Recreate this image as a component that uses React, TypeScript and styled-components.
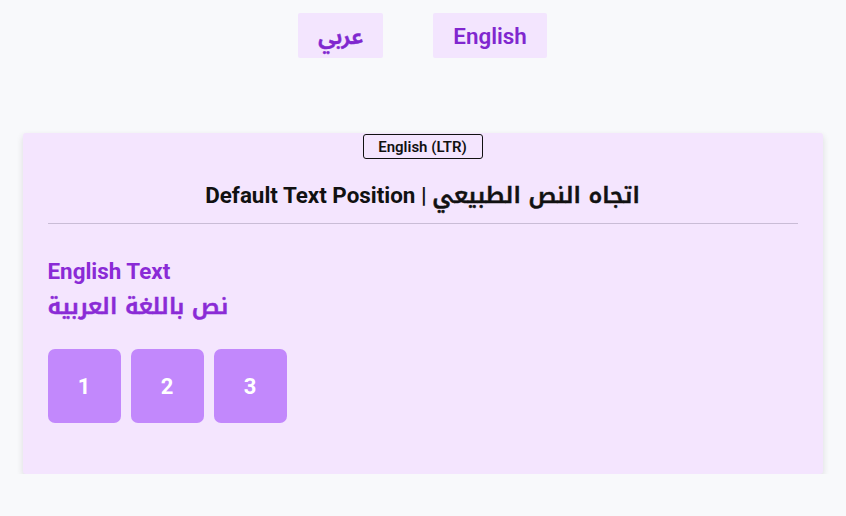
import React, { FunctionComponent, useState } from 'react';
import styled, { createGlobalStyle } from 'styled-components';

const GlobalStyle = createGlobalStyle`
  html, body {
    margin: 0;
    padding: 0;
    background-color: #f8f9fb;
    font-family: Roboto, "Noto Sans", "DejaVu Sans", sans-serif;
  }
`;

const Page = styled.div`
  display: flex;
  flex-direction: column;
  align-items: center;
  padding-top: 13px;
`;

const LangBar = styled.div`
  display: flex;
  gap: 50px;
  justify-content: center;
  margin-left: -1px;
`;

const LangButton = styled.button`
  height: 45px;
  padding: 0 20px;
  border: none;
  border-radius: 2px;
  background-color: #f3e5fe;
  color: #8027cf;
  font-family: inherit;
  font-size: 22.4px;
  font-weight: 600;
  cursor: pointer;
`;

const Card = styled.div`
  width: 800px;
  margin-top: 75px;
  margin-left: -1px;
  box-sizing: border-box;
  padding: 1px 25px 51px;
  background-color: #f4e5fe;
  border-radius: 3px;
  box-shadow: 0 3px 7px rgba(0, 0, 0, 0.12);
`;

const CardHeader = styled.div`
  display: flex;
  flex-direction: column;
  align-items: center;
  border-bottom: 1px solid #c9bcd6;
  padding-bottom: 14px;
`;

const Tag = styled.span`
  display: inline-flex;
  align-items: center;
  justify-content: center;
  width: 120px;
  height: 25px;
  box-sizing: border-box;
  border: 1px solid #111;
  border-radius: 3px;
  font-size: 15px;
  font-weight: 600;
  color: #111;
`;

const Title = styled.h2`
  margin: 23px 0 0;
  font-size: 22.4px;
  font-weight: 700;
  color: #111;
  line-height: 26px;
`;

const Body = styled.div`
  display: flex;
  flex-direction: column;
  align-items: flex-start;
  padding-top: 32px;
`;

const Line = styled.p`
  margin: 0;
  font-size: 22.4px;
  font-weight: 700;
  color: #8a2bd6;
  line-height: 30px;
  & + & {
    margin-top: 5px;
  }
`;

const Arabic = styled.span<{ $ui?: boolean }>`
  font-family: ${({ $ui }) =>
    $ui ? '"Noto Sans Arabic", sans-serif' : '"Noto Kufi Arabic", "DejaVu Sans", sans-serif'};
  font-weight: 600;
  -webkit-text-stroke: 0.5px currentColor;
`;

const Boxes = styled.div`
  display: flex;
  gap: 10px;
  margin-top: 27px;
`;

const Box = styled.div`
  display: flex;
  align-items: center;
  justify-content: center;
  width: 73px;
  height: 74px;
  border-radius: 7px;
  background-color: #c288fc;
  color: #fff;
  font-size: 22px;
  font-weight: 700;
`;

const App: FunctionComponent = () => {
  const [lang, setLang] = useState<'en' | 'ar'>('en');

  return (
    <Page>
      <GlobalStyle />
      <LangBar>
        <LangButton onClick={() => setLang('ar')}>
          <Arabic $ui>عربي</Arabic>
        </LangButton>
        <LangButton onClick={() => setLang('en')}>English</LangButton>
      </LangBar>
      <Card dir={lang === 'ar' ? 'rtl' : 'ltr'}>
        <CardHeader>
          <Tag>English (LTR)</Tag>
          <Title>
            Default Text Position | <Arabic>اتجاه النص الطبيعي</Arabic>
          </Title>
        </CardHeader>
        <Body>
          <Line>English Text</Line>
          <Line>
            <Arabic>نص باللغة العربية</Arabic>
          </Line>
          <Boxes>
            {[1, 2, 3].map((n) => (
              <Box key={n}>{n}</Box>
            ))}
          </Boxes>
        </Body>
      </Card>
    </Page>
  );
};

export default App;
